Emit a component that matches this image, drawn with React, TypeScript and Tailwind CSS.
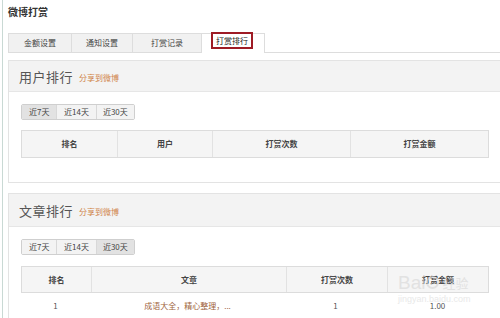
import React from "react";

const font = { fontFamily: '"Noto Sans CJK SC", "Noto Sans", sans-serif' };

function Btns({ active }: { active: number }) {
  const items = [
    { t: "近7天", w: "w-[35px]" },
    { t: "近14天", w: "w-[40px]" },
    { t: "近30天", w: "w-[39px]" },
  ];
  return (
    <div className="flex h-[16px] w-[114px] border border-[#cfcfcf] rounded-[2px] overflow-hidden">
      {items.map((it, i) => (
        <div
          key={i}
          className={`${it.w} flex items-center justify-center text-[8px] text-[#444] ${i > 0 ? "border-l border-[#d8d8d8]" : ""} ${
            i === active ? "bg-[#e2e2e2]" : "bg-[#f3f3f3]"
          }`}
        >
          {it.t}
        </div>
      ))}
    </div>
  );
}

function PanelHeader({ title, h }: { title: string; h: string }) {
  return (
    <div className={`${h} bg-[#f3f3f3] border-b border-[#e6e6e6] flex items-center pl-[10px] gap-[6px]`}>
      <span className="text-[13px] text-[#555] leading-none tracking-[0.5px]">{title}</span>
      <span className="text-[8px] text-[#d0844a] leading-none mt-[3px]">分享到微博</span>
    </div>
  );
}

export default function App() {
  return (
    <div className="w-[500px] h-[318px] overflow-hidden bg-white relative" style={font}>
      <div className="ml-[2px] h-full border-l-[1px] border-[#c9d9d4] pl-[5px]">
        <div className="h-[33px] pt-[4px] text-[10px] font-bold text-[#333]">微博打赏</div>
        <div className="flex h-[20px] border-b border-[#dddddd] mr-[-10px]">
          <div className="w-[64px] bg-[#f1f1f1] border border-[#dddddd] border-b-0 flex items-center justify-center text-[8px] text-[#444]">金额设置</div>
          <div className="w-[61px] bg-[#f1f1f1] border-t border-r border-[#dddddd] flex items-center justify-center text-[8px] text-[#444]">通知设置</div>
          <div className="w-[69px] bg-[#f1f1f1] border-t border-r border-[#dddddd] flex items-center justify-center text-[8px] text-[#444]">打赏记录</div>
          <div className="w-[63px] bg-white border-t border-r border-[#dddddd] mb-[-1px] flex items-start pl-[9px] pt-0">
            <div className="mt-[-2px] border-2 border-[#9e1b25] px-[3px] h-[17px] flex items-center text-[8px] text-[#222]">打赏排行</div>
          </div>
        </div>

        <div className="mt-[7px] border border-[#e3e3e3] mr-[-10px] h-[123px]">
          <PanelHeader title="用户排行" h="h-[31px]" />
          <div className="pl-[12px] pt-[12px]">
            <Btns active={0} />
            <div className="mt-[10px] w-[468px] h-[28px] flex bg-[#f5f5f5] border border-[#dcdcdc] text-[8px] font-bold text-[#444]">
              <div className="w-[95px] flex items-center justify-center">排名</div>
              <div className="w-[95px] flex items-center justify-center border-l border-[#e2e2e2]">用户</div>
              <div className="w-[138px] flex items-center justify-center border-l border-[#e2e2e2]">打赏次数</div>
              <div className="flex-1 flex items-center justify-center border-l border-[#e2e2e2]">打赏金额</div>
            </div>
          </div>
        </div>

        <div className="mt-[10px] border border-[#e3e3e3] mr-[-10px] h-[140px]">
          <PanelHeader title="文章排行" h="h-[33px]" />
          <div className="pl-[12px] pt-[12px]">
            <Btns active={2} />
            <div className="mt-[11px] w-[468px] h-[27px] flex bg-[#f5f5f5] border border-[#dcdcdc] text-[8px] font-bold text-[#444]">
              <div className="w-[69px] flex items-center justify-center">排名</div>
              <div className="w-[195px] flex items-center justify-center border-l border-[#e2e2e2]">文章</div>
              <div className="w-[101px] flex items-center justify-center border-l border-[#e2e2e2]">打赏次数</div>
              <div className="flex-1 flex items-center justify-center border-l border-[#e2e2e2]">打赏金额</div>
            </div>
            <div className="w-[468px] h-[26px] flex text-[8px] text-[#555]">
              <div className="w-[69px] flex items-center justify-center">1</div>
              <div className="w-[195px] flex items-center justify-center text-[#a0643c]">成语大全，精心整理，...</div>
              <div className="w-[101px] flex items-center justify-center">1</div>
              <div className="flex-1 flex items-center justify-center">1.00</div>
            </div>
          </div>
        </div>
      </div>

      <div className="absolute left-[398px] top-[273px] pointer-events-none opacity-60 flex flex-col items-start">
        <div className="flex items-center gap-[1px]">
          <span className="text-[19px] text-[#d6d6d6] leading-none" style={{ fontFamily: '"Liberation Sans", sans-serif' }}>Bai</span>
          <span className="w-[13px] h-[13px] rounded-full border-2 border-[#d6d6d6]" />
          <span className="text-[13px] text-[#d6d6d6] leading-none ml-[2px]">经验</span>
        </div>
        <span className="text-[9px] text-[#dadada] leading-none mt-[3px]" style={{ fontFamily: '"Liberation Sans", sans-serif' }}>jingyan.baidu.com</span>
      </div>
    </div>
  );
}
